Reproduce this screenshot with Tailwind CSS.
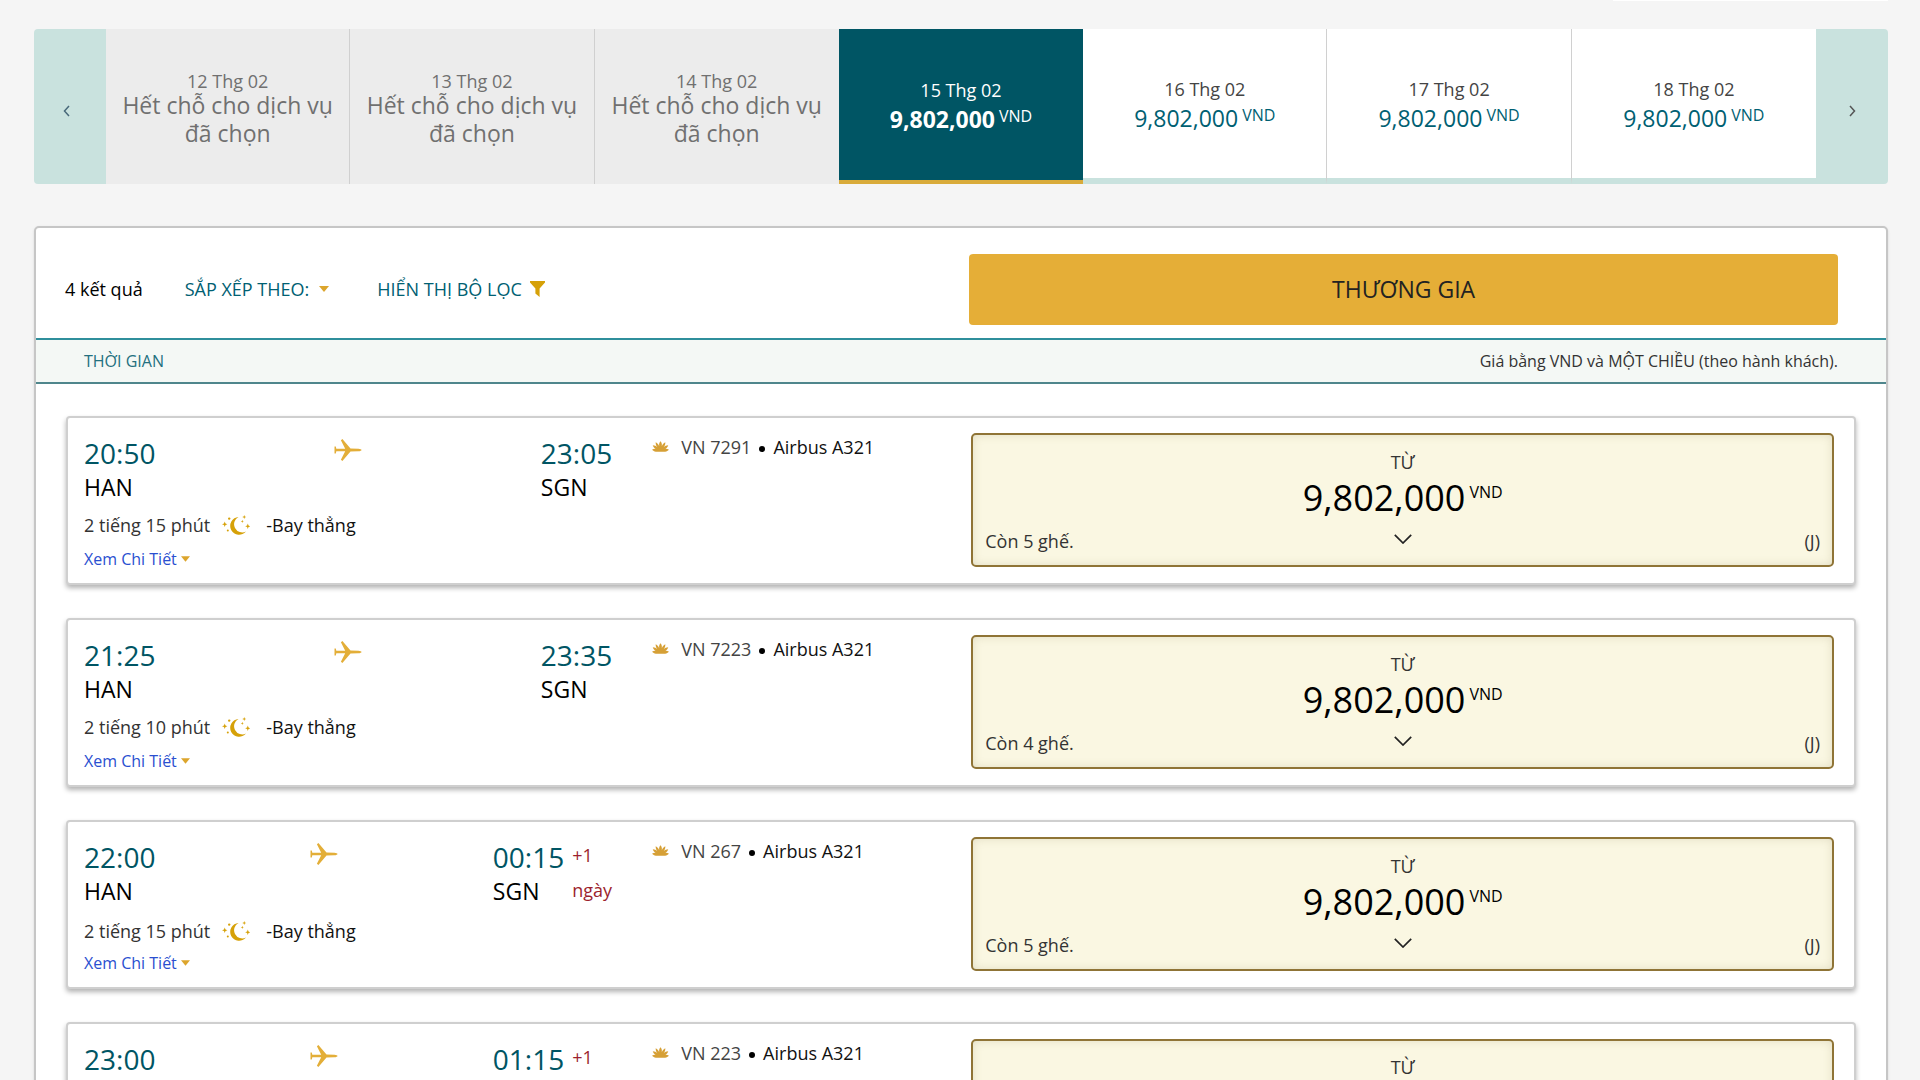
<!DOCTYPE html>
<html lang="vi">
<head>
<meta charset="utf-8">
<title>Chọn chuyến bay</title>
<meta name="viewport" content="width=device-width, initial-scale=1">
<script src="https://cdn.jsdelivr.net/npm/@tailwindcss/browser@4"></script>
</head>
<body class="h-screen overflow-x-hidden overflow-y-hidden bg-[#f5f5f5] pr-8 pl-[34px] font-['Open_Sans','Noto_Sans',sans-serif] text-black">
<svg class="hidden" aria-hidden="true">
  <symbol id="plane" viewBox="0 0 28 24"><path fill="#e3ae38" d="M.5 8.500h1.300l.5 2.200h8.900L6.900 2.200 8.400 1l8.100 9.500 8 .2c1.700.1 3 .6 3 1.300s-1.300 1.200-3 1.300l-8 .2L8.400 23l-1.500-1.200 4.300-8.500H2.300l-.5 2.200H.5z"/></symbol>
  <symbol id="moon" viewBox="0 0 28 20"><g fill="#d6a108"><path d="M16.500 2A8.900 8.900 0 1 0 24 16.500 7.500 7.500 0 0 1 16.500 2z"/><path d="M20.300 4.800l.4 1.200 1.200.4-1.200.4-.4 1.200-.4-1.200-1.200-.4 1.200-.4zM22.200 0l.6 1.500 1.500.6-1.500.5-.6 1.500-.5-1.500-1.500-.5 1.500-.6zM25.800 8.600l.7 2 1.700.7-1.700.7-.7 2-.7-2-1.900-.7 1.900-.7zM2.700 6.600l.8 1.900 1.900.7-1.900.8-.8 1.900-.7-1.900L0 9.200l2-.7z"/><circle cx="7.200" cy="3.600" r="1.200"/><circle cx="5.800" cy="15.500" r="1"/></g></symbol>
  <symbol id="lotus" viewBox="0 0 18 12"><path fill="#d6a036" d="M9 0c1.300 1.500 1.700 3.300 1.400 5.200.6-1.800 1.800-3.200 3.700-4.200.1 2.200-.5 4-1.900 5.300 1.400-1.300 3-2 5-2.100-.6 1.900-1.700 3.200-3.300 3.900 1.200-.3 2.500-.1 4.100.7-2 1.600-3.800 2.300-5.400 2.300H5.400C3.800 11.100 2 10.400 0 8.800c1.600-.8 2.900-1 4.100-.7C2.500 7.400 1.400 6.100.8 4.200c2 .1 3.600.8 5 2.100C4.400 5 3.800 3.200 3.900 1c1.900 1 3.100 2.400 3.700 4.200C7.300 3.300 7.700 1.500 9 0z"/></symbol>
  <symbol id="caret" viewBox="0 0 10 6"><path fill="#dca52c" d="M0 0h10L5 6z"/></symbol>
  <symbol id="chevron-down" viewBox="0 0 18 10"><path fill="none" stroke="#222" stroke-width="1.700" d="M.8.8 9 9 17.200.8"/></symbol>
</svg>

<header class="flex h-[29px] justify-end"><div class="h-px w-[275px] bg-white"></div></header>

<nav aria-label="Chọn ngày bay" class="flex h-[155px] overflow-hidden rounded-[4px] bg-[#c9e2de] text-center">
  <button type="button" aria-label="Ngày trước" class="flex w-[72px] shrink-0 items-center justify-center pt-2 pr-2"><svg class="h-3 w-[7px]" viewBox="0 0 7 12"><path fill="none" stroke="#48697a" stroke-width="1.500" d="M6 1 1.500 6 6 11"/></svg></button>
  <div class="grid flex-1 grid-cols-7">
    <button type="button" disabled class="flex flex-col items-center justify-center border-r border-[#d0d0d0] bg-[#ececec] px-3 pt-1 text-[#707070]"><span class="text-lg leading-5">12 Thg 02</span><span class="text-[23px] leading-7 font-medium">Hết chỗ cho dịch vụ đã chọn</span></button>
    <button type="button" disabled class="flex flex-col items-center justify-center border-r border-[#d0d0d0] bg-[#ececec] px-3 pt-1 text-[#707070]"><span class="text-lg leading-5">13 Thg 02</span><span class="text-[23px] leading-7 font-medium">Hết chỗ cho dịch vụ đã chọn</span></button>
    <button type="button" disabled class="flex flex-col items-center justify-center bg-[#ececec] px-3 pt-1 text-[#707070]"><span class="text-lg leading-5">14 Thg 02</span><span class="text-[23px] leading-7 font-medium">Hết chỗ cho dịch vụ đã chọn</span></button>
    <button type="button" aria-current="date" class="flex flex-col items-center justify-center border-b-4 border-[#d9ab3a] bg-[#005564] text-white"><span class="text-lg leading-7 font-medium">15 Thg 02</span><span class="flex gap-1 text-[23px] leading-[30px] font-bold">9,802,000<span class="text-base leading-6 font-normal">VND</span></span></button>
    <button type="button" class="flex flex-col items-center justify-center border-r border-b-[6px] border-r-[#d0d0d0] border-b-[#c9e2de] bg-white text-[#006072]"><span class="text-lg leading-7 text-[#444]">16 Thg 02</span><span class="flex gap-1 text-[23px] leading-[30px] font-medium">9,802,000<span class="text-base leading-6 font-normal">VND</span></span></button>
    <button type="button" class="flex flex-col items-center justify-center border-r border-b-[6px] border-r-[#d0d0d0] border-b-[#c9e2de] bg-white text-[#006072]"><span class="text-lg leading-7 text-[#444]">17 Thg 02</span><span class="flex gap-1 text-[23px] leading-[30px] font-medium">9,802,000<span class="text-base leading-6 font-normal">VND</span></span></button>
    <button type="button" class="flex flex-col items-center justify-center border-b-[6px] border-[#c9e2de] bg-white text-[#006072]"><span class="text-lg leading-7 text-[#444]">18 Thg 02</span><span class="flex gap-1 text-[23px] leading-[30px] font-medium">9,802,000<span class="text-base leading-6 font-normal">VND</span></span></button>
  </div>
  <button type="button" aria-label="Ngày sau" class="flex w-[72px] shrink-0 items-center justify-center pt-2"><svg class="h-3 w-[7px]" viewBox="0 0 7 12"><path fill="none" stroke="#555" stroke-width="1.500" d="M1 1 5.500 6 1 11"/></svg></button>
</nav>

<main class="mt-[42px] rounded-[5px] border-2 border-[#c6c6c6] bg-white shadow-sm">
  <div class="flex h-28 items-center border-b-2 border-[#2f8f9c] pt-3 pr-12 pl-[29px]">
    <div class="flex flex-1 items-center text-lg leading-6 font-medium">
      <p class="mr-[42px]">4 kết quả</p>
      <button type="button" class="mr-12 flex items-center gap-[10px] text-[#006072]">SẮP XẾP THEO:<svg class="h-[6px] w-[10px]"><use href="#caret"/></svg></button>
      <button type="button" class="flex items-center gap-2 text-[#006072]">HIỂN THỊ BỘ LỌC<svg class="h-4 w-[15px]" viewBox="0 0 15 16"><path fill="#d6a108" d="M0 0h15v1.500L9.600 7.500V16L5.400 12.500v-5L0 1.500z"/></svg></button>
    </div>
    <button type="button" class="h-[71px] w-[49%] rounded-[4px] bg-[#e5ae37] text-[23px] font-medium text-[#222]">THƯƠNG GIA</button>
  </div>
  <div class="flex h-11 items-center justify-between border-b-2 border-[#4f868c] bg-[#f4f8f5] px-12 text-base leading-6">
    <span class="text-[#23707f]">THỜI GIAN</span>
    <span class="text-[#333]">Giá bằng VND và MỘT CHIỀU (theo hành khách).</span>
  </div>

  <ul class="flex flex-col gap-[33px] px-[30px] py-8">
    <li class="flex h-[169px] rounded-[4px] border-2 border-[#cfcfcf] bg-white py-[15px] pr-5 pl-4 shadow-[0_3px_5px_rgba(0,0,0,0.3)]">
      <div class="flex-1 pt-px">
        <div class="flex">
          <div><p class="text-[28px] leading-[38px] font-medium text-[#005564]">20:50</p><p class="text-[23px] leading-[30px] font-medium">HAN</p></div>
          <div class="flex flex-1 justify-center pt-1"><svg class="h-6 w-7"><use href="#plane"/></svg></div>
          <div><p class="text-[28px] leading-[38px] font-medium text-[#005564]">23:05</p><p class="text-[23px] leading-[30px] font-medium">SGN</p></div>
        </div>
        <p class="mt-[11px] flex items-center text-lg leading-6 text-[#333]">2 tiếng 15 phút<svg class="mr-4 ml-3 h-5 w-7"><use href="#moon"/></svg><span class="font-medium text-[#111]">-Bay thẳng</span></p>
        <a href="#" class="mt-[10px] flex items-center gap-1 text-base leading-6 text-[#2a4fd0]">Xem Chi Tiết<svg class="h-[6px] w-[9px]"><use href="#caret"/></svg></a>
      </div>
      <p class="flex w-[359px] items-center self-start pl-10 text-lg leading-7 text-[#444]"><svg class="mr-3 h-3 w-[17px]"><use href="#lotus"/></svg>VN 7291<span class="mx-2 mt-1 size-[6px] rounded-full bg-black"></span><span class="font-medium text-[#111]">Airbus A321</span></p>
      <button type="button" class="flex h-[134px] w-[49.300%] items-end justify-between rounded-[5px] border-2 border-[#8f7436] bg-[#faf7e2] px-3 pb-3 text-lg leading-6 text-[#333] shadow-[inset_0_0_10px_rgba(120,110,60,0.18)]">
        <span class="flex-1 text-left">Còn 5 ghế.</span>
        <span class="flex flex-col items-center"><span class="leading-6">TỪ</span><span class="flex gap-1 text-4xl leading-12 font-medium text-black">9,802,000<span class="text-base leading-9">VND</span></span><svg class="mt-3 mb-[9px] h-[10px] w-[18px]"><use href="#chevron-down"/></svg></span>
        <span class="flex-1 text-right">(J)</span>
      </button>
    </li>
    <li class="flex h-[169px] rounded-[4px] border-2 border-[#cfcfcf] bg-white py-[15px] pr-5 pl-4 shadow-[0_3px_5px_rgba(0,0,0,0.3)]">
      <div class="flex-1 pt-px">
        <div class="flex">
          <div><p class="text-[28px] leading-[38px] font-medium text-[#005564]">21:25</p><p class="text-[23px] leading-[30px] font-medium">HAN</p></div>
          <div class="flex flex-1 justify-center pt-1"><svg class="h-6 w-7"><use href="#plane"/></svg></div>
          <div><p class="text-[28px] leading-[38px] font-medium text-[#005564]">23:35</p><p class="text-[23px] leading-[30px] font-medium">SGN</p></div>
        </div>
        <p class="mt-[11px] flex items-center text-lg leading-6 text-[#333]">2 tiếng 10 phút<svg class="mr-4 ml-3 h-5 w-7"><use href="#moon"/></svg><span class="font-medium text-[#111]">-Bay thẳng</span></p>
        <a href="#" class="mt-[10px] flex items-center gap-1 text-base leading-6 text-[#2a4fd0]">Xem Chi Tiết<svg class="h-[6px] w-[9px]"><use href="#caret"/></svg></a>
      </div>
      <p class="flex w-[359px] items-center self-start pl-10 text-lg leading-7 text-[#444]"><svg class="mr-3 h-3 w-[17px]"><use href="#lotus"/></svg>VN 7223<span class="mx-2 mt-1 size-[6px] rounded-full bg-black"></span><span class="font-medium text-[#111]">Airbus A321</span></p>
      <button type="button" class="flex h-[134px] w-[49.300%] items-end justify-between rounded-[5px] border-2 border-[#8f7436] bg-[#faf7e2] px-3 pb-3 text-lg leading-6 text-[#333] shadow-[inset_0_0_10px_rgba(120,110,60,0.18)]">
        <span class="flex-1 text-left">Còn 4 ghế.</span>
        <span class="flex flex-col items-center"><span class="leading-6">TỪ</span><span class="flex gap-1 text-4xl leading-12 font-medium text-black">9,802,000<span class="text-base leading-9">VND</span></span><svg class="mt-3 mb-[9px] h-[10px] w-[18px]"><use href="#chevron-down"/></svg></span>
        <span class="flex-1 text-right">(J)</span>
      </button>
    </li>
    <li class="flex h-[169px] rounded-[4px] border-2 border-[#cfcfcf] bg-white py-[15px] pr-5 pl-4 shadow-[0_3px_5px_rgba(0,0,0,0.3)]">
      <div class="flex-1 pt-px">
        <div class="flex">
          <div><p class="text-[28px] leading-[38px] font-medium text-[#005564]">22:00</p><p class="text-[23px] leading-[30px] font-medium">HAN</p></div>
          <div class="flex flex-1 justify-center pt-1"><svg class="h-6 w-7"><use href="#plane"/></svg></div>
          <div><p class="text-[28px] leading-[38px] font-medium text-[#005564]">00:15</p><p class="text-[23px] leading-[30px] font-medium">SGN</p></div>
          <p class="ml-2 w-10 text-lg leading-[35px] text-[#9c1f2e]">+1 ngày</p>
        </div>
        <p class="mt-[11px] flex items-center text-lg leading-6 text-[#333]">2 tiếng 15 phút<svg class="mr-4 ml-3 h-5 w-7"><use href="#moon"/></svg><span class="font-medium text-[#111]">-Bay thẳng</span></p>
        <a href="#" class="mt-2 flex items-center gap-1 text-base leading-6 text-[#2a4fd0]">Xem Chi Tiết<svg class="h-[6px] w-[9px]"><use href="#caret"/></svg></a>
      </div>
      <p class="flex w-[359px] items-center self-start pl-10 text-lg leading-7 text-[#444]"><svg class="mr-3 h-3 w-[17px]"><use href="#lotus"/></svg>VN 267<span class="mx-2 mt-1 size-[6px] rounded-full bg-black"></span><span class="font-medium text-[#111]">Airbus A321</span></p>
      <button type="button" class="flex h-[134px] w-[49.300%] items-end justify-between rounded-[5px] border-2 border-[#8f7436] bg-[#faf7e2] px-3 pb-3 text-lg leading-6 text-[#333] shadow-[inset_0_0_10px_rgba(120,110,60,0.18)]">
        <span class="flex-1 text-left">Còn 5 ghế.</span>
        <span class="flex flex-col items-center"><span class="leading-6">TỪ</span><span class="flex gap-1 text-4xl leading-12 font-medium text-black">9,802,000<span class="text-base leading-9">VND</span></span><svg class="mt-3 mb-[9px] h-[10px] w-[18px]"><use href="#chevron-down"/></svg></span>
        <span class="flex-1 text-right">(J)</span>
      </button>
    </li>
    <li class="flex h-[169px] rounded-[4px] border-2 border-[#cfcfcf] bg-white py-[15px] pr-5 pl-4 shadow-[0_3px_5px_rgba(0,0,0,0.3)]">
      <div class="flex-1 pt-px">
        <div class="flex">
          <div><p class="text-[28px] leading-[38px] font-medium text-[#005564]">23:00</p></div>
          <div class="flex flex-1 justify-center pt-1"><svg class="h-6 w-7"><use href="#plane"/></svg></div>
          <div><p class="text-[28px] leading-[38px] font-medium text-[#005564]">01:15</p></div>
          <p class="ml-2 w-10 text-lg leading-[35px] text-[#9c1f2e]">+1</p>
        </div>
      </div>
      <p class="flex w-[359px] items-center self-start pl-10 text-lg leading-7 text-[#444]"><svg class="mr-3 h-3 w-[17px]"><use href="#lotus"/></svg>VN 223<span class="mx-2 mt-1 size-[6px] rounded-full bg-black"></span><span class="font-medium text-[#111]">Airbus A321</span></p>
      <button type="button" class="flex h-[134px] w-[49.300%] items-start justify-center rounded-[5px] border-2 border-[#8f7436] bg-[#faf7e2] px-3 pt-[14px] text-lg leading-6 text-[#333] shadow-[inset_0_0_10px_rgba(120,110,60,0.18)]">TỪ</button>
    </li>
  </ul>
</main>
</body>
</html>
